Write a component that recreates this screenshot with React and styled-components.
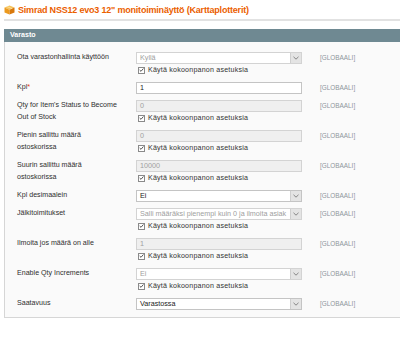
import React from "react";
import styled, { createGlobalStyle } from "styled-components";

const GlobalStyle = createGlobalStyle`
  html, body {
    margin: 0;
    padding: 0;
    background: #ffffff;
  }
  body {
    font-family: "Liberation Sans", Arial, sans-serif;
    width: 400px;
    height: 342px;
    overflow: hidden;
  }
`;

const rows = [
  { label: ["Ota varastonhallinta käyttöön"], type: "select", value: "Kyllä", disabled: true, check: true },
  { label: ["Kpl"], required: true, type: "text", value: "1" },
  { label: ["Qty for Item's Status to Become", "Out of Stock"], type: "text", value: "0", disabled: true, check: true },
  { label: ["Pienin sallittu määrä", "ostoskorissa"], type: "text", value: "0", disabled: true, check: true },
  { label: ["Suurin sallittu määrä", "ostoskorissa"], type: "text", value: "10000", disabled: true, check: true },
  { label: ["Kpl desimaalein"], type: "select", value: "Ei" },
  { label: ["Jälkitoimitukset"], type: "select", value: "Salli määräksi pienempi kuin 0 ja ilmoita asiak", disabled: true, check: true },
  { label: ["Ilmoita jos määrä on alle"], type: "text", value: "1", disabled: true, check: true },
  { label: ["Enable Qty Increments"], type: "select", value: "Ei", disabled: true, check: true },
  { label: ["Saatavuus"], type: "select", value: "Varastossa" },
];

export default function App() {
  return (
    <>
      <GlobalStyle />
      <Page>
        <TitleBar>
          <BoxIcon />
          <Title>Simrad NSS12 evo3 12" monitoiminäyttö (Karttaplotterit)</Title>
        </TitleBar>
        <Section>
          <SectionHead>Varasto</SectionHead>
          <SectionBody>
            {rows.map((r, i) => (
              <Row key={i}>
                <Label>
                  {r.label.map((l, j) => (
                    <div key={j}>
                      {l}
                      {r.required && j === 0 && <Req>*</Req>}
                    </div>
                  ))}
                </Label>
                <Value>
                  {r.type === "select" ? (
                    <Select disabled={r.disabled}>
                      <SelectText disabled={r.disabled}>{r.value}</SelectText>
                      <Arrow>
                        <svg width="6" height="4" viewBox="0 0 6 4">
                          <path d="M0.5 0.8 L3 3.2 L5.5 0.8" fill="none" stroke="#7b7b7b" strokeWidth="0.9" />
                        </svg>
                      </Arrow>
                    </Select>
                  ) : (
                    <TextInput disabled={r.disabled}>{r.value}</TextInput>
                  )}
                  {r.check && (
                    <CheckLine>
                      <CheckBox>
                        <svg width="6" height="6" viewBox="0 0 6 6">
                          <path d="M0.8 3 L2.4 4.6 L5.3 1.2" fill="none" stroke="#333" strokeWidth="1" />
                        </svg>
                      </CheckBox>
                      Käytä kokoonpanon asetuksia
                    </CheckLine>
                  )}
                </Value>
                <Scope>[GLOBAALI]</Scope>
              </Row>
            ))}
          </SectionBody>
        </Section>
      </Page>
    </>
  );
}

function BoxIcon() {
  return (
    <svg width="11" height="10" viewBox="0 0 11 10">
      <path d="M5.5 0.5 L10.5 2.6 L5.5 4.8 L0.5 2.6 Z" fill="#f6c25a" />
      <path d="M0.5 2.6 L5.5 4.8 L5.5 9.6 L0.5 7.4 Z" fill="#ec9a1e" />
      <path d="M10.5 2.6 L5.5 4.8 L5.5 9.6 L10.5 7.4 Z" fill="#d8780c" />
      <path d="M3 1.6 L8 3.7" stroke="#fbe3a4" strokeWidth="0.8" />
    </svg>
  );
}

const Page = styled.div`
  padding: 0 0 0 4px;
`;

const TitleBar = styled.div`
  display: flex;
  align-items: center;
  gap: 3px;
  height: 19px;
  border-bottom: 2px solid #e2e2e2;
  margin-bottom: 8px;
`;

const Title = styled.h3`
  margin: 0;
  font-size: 9px;
  letter-spacing: -0.2px;
  font-weight: bold;
  color: #eb5e00;
  white-space: nowrap;
`;

const Section = styled.div`
  margin-right: -4px;
`;

const SectionHead = styled.div`
  height: 13px;
  line-height: 13px;
  background: #6f8992;
  color: #ffffff;
  font-size: 7.1px;
  font-weight: bold;
  padding-left: 6px;
`;

const SectionBody = styled.div`
  background: #fafafa;
  border: 1px solid #d6d6d6;
  border-top: none;
  padding: 10px 0 1px 12px;
`;

const Row = styled.div`
  display: grid;
  grid-template-columns: 119px 166px auto;
  padding-bottom: 6px;
`;

const Label = styled.div`
  font-size: 7.1px;
  line-height: 11.5px;
  color: #2f2f2f;
`;

const Req = styled.span`
  color: #eb340a;
`;

const Value = styled.div`
  display: flex;
  flex-direction: column;
`;

const fieldBase = `
  box-sizing: border-box;
  height: 12px;
  font-size: 7.2px;
  line-height: 10px;
`;

const TextInput = styled.div`
  ${fieldBase}
  padding-left: 3px;
  border: 1px solid ${(p) => (p.disabled ? "#d3d3d3" : "#c4c4c4")};
  background: ${(p) => (p.disabled ? "#efefef" : "#ffffff")};
  color: ${(p) => (p.disabled ? "#a0a0a0" : "#222222")};
`;

const Select = styled.div`
  ${fieldBase}
  display: flex;
  border: 1px solid ${(p) => (p.disabled ? "#d3d3d3" : "#c4c4c4")};
  background: #ffffff;
`;

const SelectText = styled.div`
  flex: 1;
  padding-left: 3px;
  overflow: hidden;
  white-space: nowrap;
  color: ${(p) => (p.disabled ? "#a0a0a0" : "#222222")};
`;

const Arrow = styled.div`
  width: 10px;
  display: flex;
  align-items: center;
  justify-content: center;
  background: #e4e4e4;
  border-left: 1px solid #cfcfcf;
`;

const CheckLine = styled.div`
  display: flex;
  align-items: center;
  gap: 3px;
  height: 12px;
  padding-left: 2px;
  font-size: 7.1px;
  letter-spacing: 0.2px;
  color: #333333;
  white-space: nowrap;
`;

const CheckBox = styled.span`
  box-sizing: border-box;
  width: 7px;
  height: 7px;
  border: 1px solid #8a8a8a;
  background: #ffffff;
  display: flex;
  align-items: center;
  justify-content: center;
`;

const Scope = styled.div`
  margin-left: 18px;
  font-size: 6.4px;
  line-height: 12px;
  color: #8e969c;
  white-space: nowrap;
`;
